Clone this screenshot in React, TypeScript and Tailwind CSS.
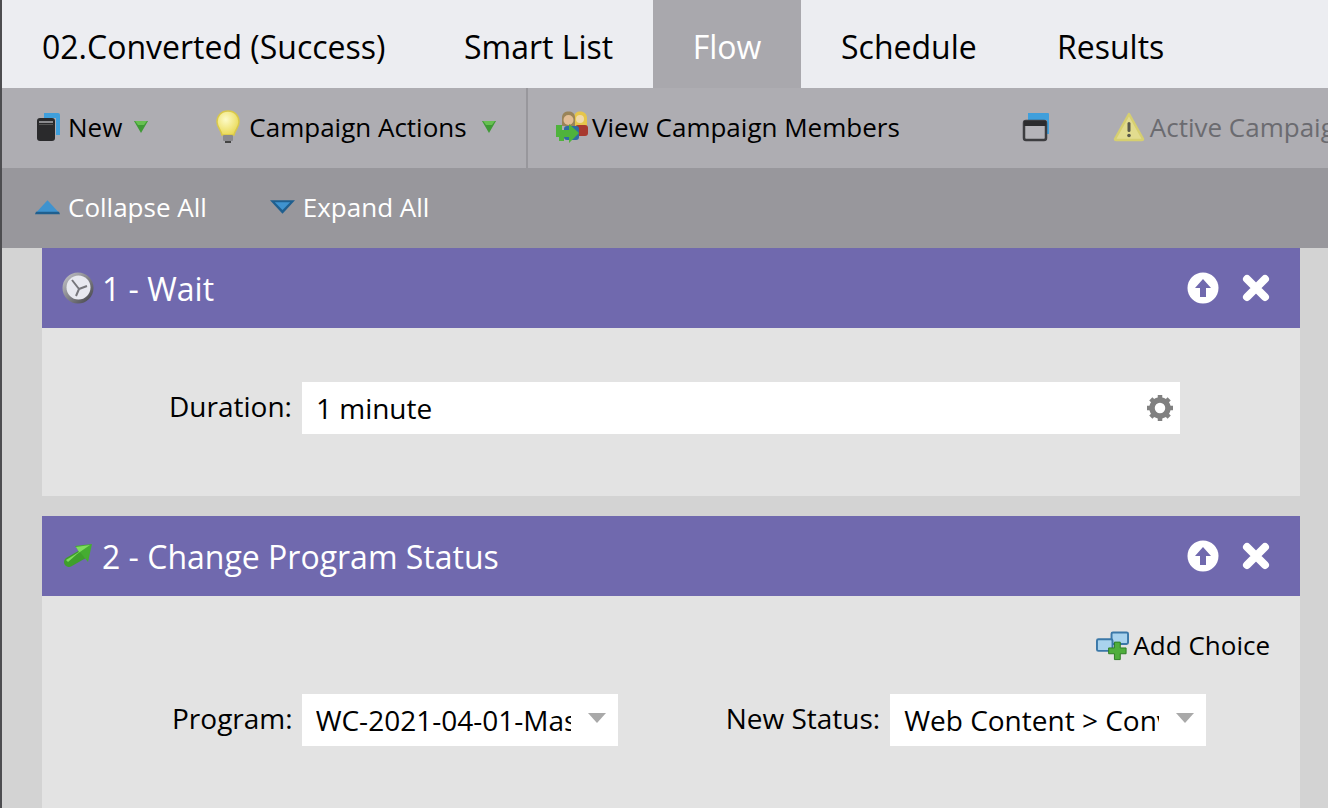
import { ReactNode } from 'react';

const BookIcon = () => (
  <svg width="24" height="30" viewBox="0 0 24 30" className="shrink-0">
    <path d="M8 1h14a2 2 0 0 1 2 2v20h-4V6H8z" fill="#3f9fdc" />
    <rect x="1" y="6" width="18" height="23" rx="3" fill="#2a2a2c" />
    <rect x="3" y="9" width="14" height="2" fill="#8b8b8e" />
    <rect x="3" y="12" width="14" height="1" fill="#555" />
  </svg>
);

const BulbIcon = () => (
  <svg width="26" height="34" viewBox="0 0 26 34" className="shrink-0">
    <defs>
      <radialGradient id="bulb" cx="40%" cy="35%" r="70%">
        <stop offset="0%" stopColor="#fdfbc8" />
        <stop offset="100%" stopColor="#e9d850" />
      </radialGradient>
    </defs>
    <path d="M13 1C6 1 2 6 2 12c0 5 4 8 5 13h12c1-5 5-8 5-13 0-6-4-11-11-11z" fill="url(#bulb)" stroke="#d9c84a" strokeWidth="1.5" />
    <rect x="8" y="25" width="10" height="6" rx="1" fill="#8a8a8e" />
    <rect x="10" y="31" width="6" height="2" fill="#444" />
  </svg>
);

const MembersIcon = () => (
  <svg width="32" height="32" viewBox="0 0 32 32" className="shrink-0">
    <path d="M18 7c0-5 3-6.500 6-6.500S31 2 31 7v9H18z" fill="#e6c64b" />
    <circle cx="24" cy="8" r="4" fill="#f0d9ab" />
    <rect x="19" y="14" width="13" height="11" rx="3" fill="#a8392f" />
    <path d="M6 7c0-5 3-6.500 6.500-6.500S19 2 19 7v8H6z" fill="#9a8459" />
    <circle cx="12.500" cy="9" r="5" fill="#e2bd95" />
    <rect x="8" y="15" width="15" height="14" rx="3" fill="#2f6ca3" />
    <path d="M0 14h6v5h7v-6l10 9-10 10v-6H8v4H3v-4H0z" fill="#4fb33c" />
  </svg>
);

const WindowIcon = () => (
  <svg width="28" height="30" viewBox="0 0 28 30" className="shrink-0">
    <path d="M6 1h20a1 1 0 0 1 1 1v20h-2V8H6z" fill="#3f9fdc" />
    <rect x="2" y="9" width="22" height="19" rx="2" fill="#b5b4b9" stroke="#3d3d40" strokeWidth="2.500" />
    <rect x="2" y="9" width="22" height="5" fill="#2c2c2e" />
  </svg>
);

const WarningIcon = () => (
  <svg width="32" height="30" viewBox="0 0 32 30" className="shrink-0">
    <path d="M16 2 30 27a1 1 0 0 1-1 1H3a1 1 0 0 1-1-1z" fill="#e2dc8f" stroke="#d6cf70" strokeWidth="2.500" strokeLinejoin="round" />
    <rect x="14.500" y="10" width="3" height="10" rx="1.500" fill="#58584a" />
    <circle cx="16" cy="23.500" r="1.800" fill="#58584a" />
  </svg>
);

const GreenCaret = () => (
  <svg width="14" height="14" viewBox="0 0 14 14" className="shrink-0">
    <path d="M0 1h14L7 13z" fill="#3f9a35" />
    <path d="M1 1h12L10 5H4z" fill="#68c052" />
  </svg>
);

const BlueCaret = ({ up }: { up?: boolean }) => (
  <svg width="25" height="16" viewBox="0 0 26 16" className="shrink-0">
    {up ? (
      <>
        <path d="M1 14 13 1l12 13z" fill="#3f93cf" />
        <path d="M1 13h24l1 2.500H0z" fill="#1f5f8f" />
      </>
    ) : (
      <>
        <path d="M0 1h26L13 15z" fill="#1f5f8f" />
        <path d="M5 3h16l-8 8z" fill="#3f93cf" />
      </>
    )}
  </svg>
);

const ClockIcon = () => (
  <svg width="32" height="32" viewBox="0 0 32 32" className="shrink-0">
    <defs>
      <linearGradient id="clockRing" x1="0" y1="0" x2="1" y2="1">
        <stop offset="0%" stopColor="#c9c9ce" />
        <stop offset="100%" stopColor="#3e3e44" />
      </linearGradient>
    </defs>
    <circle cx="16" cy="16" r="15.500" fill="url(#clockRing)" />
    <circle cx="16.500" cy="15.500" r="12" fill="#e8e9f0" />
    <path d="M17 17 10 8M17 17l8-3M17 17l-3 7" stroke="#77777c" strokeWidth="2" fill="none" />
  </svg>
);

const ArrowIcon = () => (
  <svg width="30" height="24" viewBox="0 0 30 24" className="shrink-0">
    <path d="M7 18 21 10" stroke="#3f9f2c" strokeWidth="10" strokeLinecap="round" />
    <path d="M13 2 30 0l-4 18z" fill="#45ad31" />
    <path d="M4 16 17 8l-3-5 14-2-13 9L6 18z" fill="#7fdc5e" />
  </svg>
);

const UpCircle = () => (
  <svg width="32" height="32" viewBox="0 0 32 32" className="shrink-0">
    <circle cx="16" cy="16" r="15.500" fill="#fff" />
    <path d="M16 7 24 16h-5v9h-6v-9H8z" fill="#7069ae" />
  </svg>
);

const CloseX = () => (
  <svg width="30" height="30" viewBox="0 0 30 30" className="shrink-0">
    <path d="M6 6 24 24M24 6 6 24" stroke="#fff" strokeWidth="8" strokeLinecap="round" />
  </svg>
);

const GearIcon = () => (
  <svg width="30" height="30" viewBox="0 0 30 30" className="shrink-0">
    <circle cx="15" cy="15" r="8" fill="none" stroke="#808080" strokeWidth="5.500" />
    <path
      d="M15 2v6M15 22v6M2 15h6M22 15h6M5.800 5.800l4.200 4.200M20 20l4.200 4.200M24.200 5.800 20 10M10 20l-4.200 4.200"
      stroke="#808080"
      strokeWidth="4.500"
    />
  </svg>
);

const AddChoiceIcon = () => (
  <svg width="33" height="30" viewBox="0 0 34 30" className="shrink-0">
    <rect x="16" y="1" width="17" height="12" rx="1.500" fill="#a9d3ee" stroke="#3b78a8" strokeWidth="2" />
    <rect x="1" y="8" width="16" height="12" rx="1.500" fill="#a9d3ee" stroke="#3b78a8" strokeWidth="2" />
    <path d="M19 11h6v6h6v6h-6v6h-6v-6h-6v-6h6z" fill="#4fae3c" stroke="#2d7d24" strokeWidth="1" />
  </svg>
);

const SelectCaret = () => (
  <svg width="18" height="10" viewBox="0 0 18 10" className="shrink-0">
    <path d="M0 0h18L9 10z" fill="#a9a9a9" />
  </svg>
);

function Tab({ label, active, className }: { label: string; active?: boolean; className: string }) {
  return (
    <div className={`flex h-full items-center pt-[5px] text-[32px] ${active ? 'bg-[#a9a8ad] text-white' : 'text-black'} ${className}`}>
      {label}
    </div>
  );
}

function StepHeader({ icon, title, gapClass }: { icon: ReactNode; title: string; gapClass: string }) {
  return (
    <div className="flex h-20 items-center bg-[#7069ae] pl-5 pr-[29px] text-white">
      <div className={`flex flex-1 items-center ${gapClass} text-[32px]`}>
        {icon}
        <span className="mt-0.5">{title}</span>
      </div>
      <div className="flex items-center gap-[22px]">
        <UpCircle />
        <CloseX />
      </div>
    </div>
  );
}

function SelectBox({ value }: { value: string }) {
  return (
    <div className="flex h-[52px] w-[316px] items-center bg-white pl-[14px]">
      <span className="w-[255px] overflow-hidden whitespace-nowrap text-[28px] text-black">{value}</span>
      <div className="ml-[17px] mb-1">
        <SelectCaret />
      </div>
    </div>
  );
}

export default function App() {
  return (
    <div className="h-[808px] w-[1328px] overflow-hidden border-l-2 border-[#4d4d50] bg-[#d3d3d3] font-['Open_Sans',sans-serif]">
      <div className="flex h-[88px] bg-[#ecedf1]">
        <Tab label="02.Converted (Success)" className="ml-10 w-[422px]" />
        <Tab label="Smart List" className="w-[189px]" />
        <Tab label="Flow" active className="w-[148px] justify-center" />
        <Tab label="Schedule" className="w-[217px] pl-10" />
        <Tab label="Results" className="pl-[39px]" />
      </div>

      <div className="flex h-20 items-center whitespace-nowrap bg-[#aeadb2] pb-0.5 text-[26px] text-black">
        <div className="flex h-[78px] w-[524px] shrink-0 items-center pl-[34px]">
          <BookIcon />
          <span className="ml-2">New</span>
          <span className="ml-[12px]"><GreenCaret /></span>
          <span className="ml-[67px]"><BulbIcon /></span>
          <span className="ml-2">Campaign Actions</span>
          <span className="ml-[15px]"><GreenCaret /></span>
        </div>
        <div className="h-20 w-0.5 shrink-0 self-start bg-[#98979c]" />
        <div className="ml-[28px] flex shrink-0 items-center">
          <MembersIcon />
          <span className="ml-1">View Campaign Members</span>
        </div>
        <div className="ml-[122px] shrink-0"><WindowIcon /></div>
        <div className="ml-[63px] flex shrink-0 items-center text-[#6b6b70]">
          <WarningIcon />
          <span className="ml-[5px]">Active Campaign</span>
        </div>
      </div>

      <div className="flex h-20 items-center bg-[#98979c] pb-0.5 pl-[33px] text-[26px] text-white">
        <BlueCaret up />
        <span className="ml-2">Collapse All</span>
        <span className="ml-[63px]"><BlueCaret /></span>
        <span className="ml-2">Expand All</span>
      </div>

      <div className="ml-10 flex w-[1258px] flex-col gap-5">
        <div>
          <StepHeader icon={<ClockIcon />} title="1 - Wait" gapClass="gap-2" />
          <div className="flex h-[168px] items-start bg-[#e3e3e3] pt-[54px] pl-[127px]">
            <span className="mr-[10px] text-[28px] leading-[48px] text-black">Duration:</span>
            <div className="flex h-[52px] w-[878px] items-center justify-between bg-white pl-[14px] pr-[5px] text-[28px] text-black">
              <span>1 minute</span>
              <GearIcon />
            </div>
          </div>
        </div>

        <div>
          <StepHeader icon={<ArrowIcon />} title="2 - Change Program Status" gapClass="gap-[10px]" />
          <div className="h-[212px] bg-[#e3e3e3] px-[30px] pt-8">
            <div className="flex h-9 items-center justify-end text-[26px] text-black">
              <AddChoiceIcon />
              <span className="ml-1 mb-0.5">Add Choice</span>
            </div>
            <div className="mt-[30px] flex items-center pl-[100px] text-[28px] text-black">
              <span className="mr-[9px] mb-1">Program:</span>
              <SelectBox value="WC-2021-04-01-Master" />
              <span className="ml-[108px] mr-[10px] mb-1">New Status:</span>
              <SelectBox value="Web Content > Converted" />
            </div>
          </div>
        </div>
      </div>
    </div>
  );
}
